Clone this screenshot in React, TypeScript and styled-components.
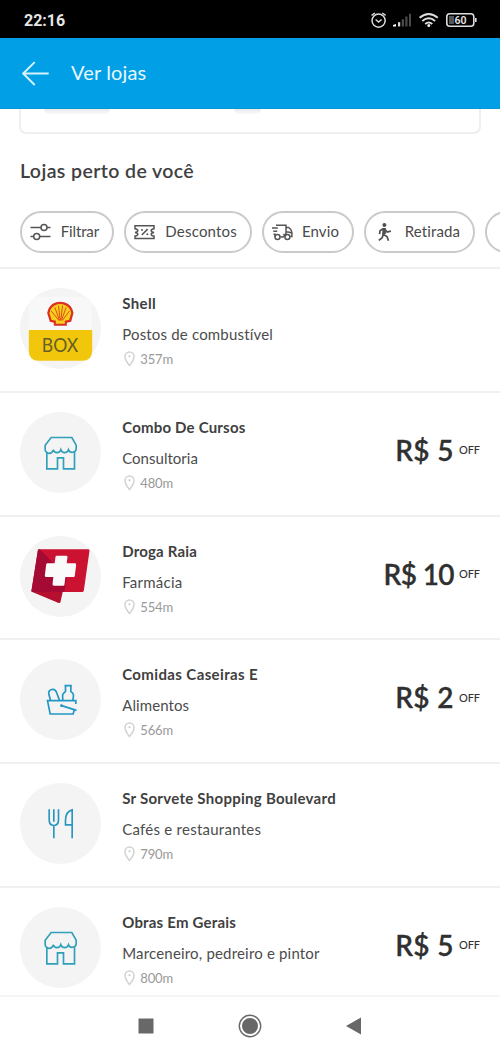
import React from "react";
import styled, { createGlobalStyle } from "styled-components";

const GlobalStyle = createGlobalStyle`
  * { box-sizing: border-box; }
  html, body { margin: 0; padding: 0; background: #fff; overflow: hidden; }
  body { font-family: Lato, "Liberation Sans", sans-serif; color: #333; }
  svg { display: block; flex: none; }
`;

const Screen = styled.div`
  width: 500px;
  height: 1056px;
  display: flex;
  flex-direction: column;
  overflow: hidden;
  background: #fff;
`;

const StatusBar = styled.div`
  height: 38px;
  flex: none;
  display: flex;
  align-items: center;
  justify-content: space-between;
  padding: 2px 22px 0 24px;
  background: #000;
`;

const Clock = styled.span`
  font: 700 16px/20px Roboto, sans-serif;
  padding-top: 1px;
  color: #e6e6e6;
`;

const Header = styled.header`
  height: 71px;
  flex: none;
  display: flex;
  align-items: center;
  gap: 22px;
  padding-left: 22px;
  background: #019fe5;
  border-bottom: 1px solid #0795d4;
`;

const HeaderTitle = styled.h1`
  margin: 0 0 2px;
  font-size: 20px;
  line-height: 24px;
  font-weight: 400;
  letter-spacing: 0.15px;
  color: #e6f8ff;
`;

const Content = styled.main`
  flex: 1;
  min-height: 0;
  overflow: hidden;
  display: flex;
  flex-direction: column;
`;

const CardEdge = styled.div`
  height: 25px;
  flex: none;
  margin: 0 19px;
  padding-left: 23px;
  display: flex;
  gap: 124px;
  border: 2px solid #efefef;
  border-top: 0;
  border-radius: 0 0 7px 7px;
`;

const CardShade = styled.div<{ $width: number }>`
  width: ${(p) => p.$width}px;
  height: 5px;
  border-radius: 0 0 12px 12px;
  background: linear-gradient(#e9e9ee, #fafafa);
`;

const SectionTitle = styled.h2`
  margin: 25px 0 28px 20px;
  font-size: 19.5px;
  line-height: 24px;
  font-weight: 600;
  letter-spacing: 0.4px;
  color: #404040;
`;

const Chips = styled.div`
  display: flex;
  flex: none;
  gap: 10px;
  padding: 0 0 14px 20px;
  height: 56px;
`;

const Chip = styled.button<{ $width: number }>`
  width: ${(p) => p.$width}px;
  height: 42px;
  flex: none;
  display: flex;
  align-items: center;
  justify-content: space-between;
  padding: 0 13px 1px 8px;
  border: 2px solid #cacaca;
  border-radius: 21px;
  background: #fff;
  font: 400 15px/20px Lato, sans-serif;
  color: #4a4a4a;
`;

const ChipLabel = styled.span<{ $track: number }>`
  padding-bottom: 1px;
  letter-spacing: ${(p) => p.$track}px;
`;

const StoreRow = styled.article`
  height: 123.75px;
  flex: none;
  display: flex;
  padding: 19px 20px 0 20px;
  border-top: 2px solid #f0f0f0;
`;

const Avatar = styled.div`
  width: 81px;
  height: 81px;
  flex: none;
  border-radius: 50%;
  background: #f4f4f4;
`;

const Info = styled.div`
  flex: 1;
  padding: 5px 0 0 21.2px;
  white-space: nowrap;
`;

const Name = styled.h3<{ $track: number }>`
  margin: 0;
  font-size: 15px;
  line-height: 20px;
  font-weight: 700;
  letter-spacing: ${(p) => p.$track}px;
  color: #404040;
`;

const Category = styled.p<{ $track: number }>`
  margin: 11px 0 0;
  font-size: 15px;
  line-height: 20px;
  letter-spacing: ${(p) => p.$track}px;
  color: #4c4c4c;
`;

const Distance = styled.div`
  margin-top: 5px;
  display: flex;
  align-items: center;
  gap: 5px;
  padding-left: 2px;
  font-size: 13px;
  line-height: 20px;
  letter-spacing: -0.1px;
  color: #999;
`;

const Price = styled.div`
  height: 40px;
  margin-top: 18px;
  display: flex;
  align-items: center;
  gap: 5px;
  white-space: nowrap;
`;

const Amount = styled.span<{ $track: number }>`
  font-size: 28px;
  line-height: 40px;
  font-weight: 600;
  letter-spacing: ${(p) => p.$track}px;
  color: #303030;
  -webkit-text-stroke: 0.3px #303030;
`;

const Off = styled.span`
  font-size: 11px;
  line-height: 14px;
  font-weight: 500;
  letter-spacing: -0.1px;
  padding-top: 1px;
  color: #333;
`;

const NavBar = styled.nav`
  height: 61px;
  flex: none;
  display: flex;
  align-items: center;
  justify-content: center;
  gap: 84px;
  padding: 0 1px 2px 0;
  border-top: 2px solid #f5f5f5;
  background: #fff;
`;

const StatusIcons = () => (
  <svg width="110" height="20" viewBox="0 0 110 20" fill="none" stroke="#ddd">
    <circle cx="10.6" cy="10.6" r="6.6" strokeWidth="1.5" />
    <path d="M7.6 9.5l3 2.5 3-2.5M3.6 5.4L6.9 3M17.6 5.4L14.3 3" strokeWidth="1.4" />
    <g stroke="none">
      <path d="M25 16.4v-1.4l3-1v2.4z" fill="#fff" />
      <path d="M30 12.2h2.2v4.2H30z" fill="#ddd" />
      <path d="M33.7 9.2H36v7.2h-2.3zM37.3 6.6h2.2v9.8h-2.2zM41 3.8h2v12.6h-2z" fill="#4a4a4a" />
    </g>
    <path d="M51.6 7.7q9-7.5 18.2 0M54.3 10.9q6.5-5.3 12.8 0M57.2 13.9q3.6-2.9 7.1 0" strokeWidth="1.9" />
    <circle cx="60.8" cy="15.4" r="1.5" fill="#eee" stroke="none" />
    <rect x="78.8" y="3.7" width="27" height="12.6" rx="3" strokeWidth="1.6" />
    <path d="M81 6h5v8h-5z" fill="#555" stroke="none" />
    <path d="M107.8 8v4" strokeWidth="1.6" />
    <text x="92.4" y="13.8" textAnchor="middle" fontFamily="Roboto" fontSize="10.5" fontWeight="600" fill="#e6e6e6" stroke="none">60</text>
  </svg>
);

const BackArrow = () => (
  <svg width="27" height="26" viewBox="0 0 27 26" fill="none" stroke="#d5f3ff" strokeWidth="1.9">
    <path d="M26.7 13.5H1.2M12.7 2.1L1.2 13.5l11.5 11.5" />
  </svg>
);

const FilterIcon = () => (
  <svg width="21" height="20" viewBox="0 0 21 20" fill="none" stroke="#555" strokeWidth="1.5">
    <path d="M.5 5.6h10.6M17 5.6h3.5M.5 14.6h3M10 14.6h10.5" />
    <circle cx="14" cy="5.6" r="3" />
    <circle cx="6.7" cy="14.6" r="3" />
  </svg>
);

const CouponIcon = () => (
  <svg width="21" height="20" viewBox="0 0 21 20" fill="none" stroke="#555" strokeWidth="1.5">
    <path d="M1 3.8h19v3q-2.8.4-2.8 1.8t2.8 1.8q-2.8.4-2.8 1.8t2.8 1.8v2.500H1V14q2.800-.4 2.800-1.800T1 10.400q2.800-.4 2.800-1.800T1 6.800z" />
    <path d="M13.6 7.1L7.8 13" />
    <circle cx="8" cy="8" r="1" fill="#555" stroke="none" />
    <circle cx="13.4" cy="12.2" r="1" fill="#555" stroke="none" />
  </svg>
);

const TruckIcon = () => (
  <svg width="21" height="20" viewBox="0 0 21 20" fill="none" stroke="#555" strokeWidth="1.5">
    <path d="M4 3.2h10v8.500l-3 3.300H8.300M0 6h5.800M1.200 9.300h4M3 14.800v-2.500H1.500M14 5.400h2.500q2.700 1.500 3.400 5v4h-1.500M14 10h2.300l3.400 1M11.500 12.200l2.500 2" />
    <circle cx="5.5" cy="15" r="2.5" />
    <circle cx="15.4" cy="15" r="2.5" />
  </svg>
);

const WalkIcon = () => (
  <svg width="21" height="20" viewBox="0 0 21 20" fill="none" stroke="#4f4f4f" strokeWidth="1.7">
    <circle cx="10.4" cy="3" r="2" fill="#4f4f4f" stroke="none" />
    <path d="M9.7 6.5l-.7 5.700 4 2.300 1.500 4.200M9.200 12.200l-1 3.500-3.400 2.700M9.500 6.500L6 8.800l-.4 3.400M10.300 6.500l2.800 3.500 3.800-.8" />
    <path d="M8.8 6h3v6H8.600z" fill="#4f4f4f" stroke="none" />
  </svg>
);

const PinIcon = () => (
  <svg width="11" height="16" viewBox="0 0 11 16" fill="none" stroke="#d2d2d2" strokeWidth="1.5">
    <path d="M5.500 14.500Q1 9 1 5.700a4.500 4.700 0 0 1 9 0Q10 9 5.500 14.500z" />
    <circle cx="5.5" cy="5.3" r="1" fill="#c5c5c5" stroke="none" />
  </svg>
);

const StorefrontArt = () => (
  <svg width="81" height="81" viewBox="0 0 81 81">
    <g transform="translate(-10.5 -11.5) scale(.33333)" fill="none" stroke="#2f9fba" strokeWidth="5">
      <path d="M125 111h62l13 23v11a12 12 0 0 1-23 3 12 12 0 0 1-23 0 12 12 0 0 1-23 0 12 12 0 0 1-24-3v-11z" />
      <path d="M112 155v50h32v-33h18v33h33v-50" />
    </g>
  </svg>
);

const GroceriesArt = () => (
  <svg width="81" height="81" viewBox="0 0 81 81">
    <g transform="translate(-10.5 -9) scale(.33333)" fill="none" stroke="#2197c4" strokeWidth="5">
      <path d="M199 162v-10h-85l8 40h69l3-12" />
      <path d="M154 166l47 15" />
      <circle cx="156" cy="167" r="4" fill="#2197c4" stroke="none" />
      <path d="M123 151l-5-18c-4-16 18-21 23-6l9 24M160 151c-1-18-3-17 8-27v-17h16v17c10 9 9 9 6 27M165 107h22" />
    </g>
  </svg>
);

const CutleryArt = () => (
  <svg width="81" height="81" viewBox="0 0 81 81">
    <g transform="translate(-10.5 -132.8) scale(.33333)" fill="none" stroke="#2997c0" strokeWidth="5">
      <path d="M119 477v32q0 17 14 17t14-17v-32M133 477v38M133 526v38M188 564v-85q-20 5-20 32v13h20" />
    </g>
  </svg>
);

const ShellArt = () => (
  <svg width="81" height="81" viewBox="0 0 81 81">
    <g transform="translate(-10.5 -8) scale(.33333)">
      <rect x="58" y="50" width="190" height="192" rx="26" fill="#f8f8f8" />
      <path d="M58 150h190v62q0 30-30 30H88q-30 0-30-30z" fill="#f2c60b" />
      <path d="M133 137v-9l-12-3-8-26q4-25 27-32 12-3 24 0 24 7 28 32l-7 26-13 3v9z" fill="#da3024" />
      <path d="M139 131v-9l-13-3-6-20q4-21 24-26 8-2 16 0 21 5 25 26l-6 20-13 3v9z" fill="#f7cf18" />
      <path d="M149 122l-24-29M150 121l-14-39M152 121l-5-44M154 121l5-44M156 121l14-39M158 122l22-29" fill="none" stroke="#da3024" strokeWidth="2.5" />
      <text x="97" y="215" fontFamily="Lato" fontSize="60" fontWeight="400" textLength="109" lengthAdjust="spacingAndGlyphs" fill="#655f28">BOX</text>
    </g>
  </svg>
);

const PharmacyArt = () => (
  <svg width="81" height="81" viewBox="0 0 81 81">
    <g transform="translate(-10.5 -11) scale(.33333)" strokeLinejoin="round">
      <path d="M70 197l87-2-8 35z" fill="#b5102f" stroke="#b5102f" strokeWidth="8" />
      <path d="M89 77h147l-17 120H70z" fill="#cb1230" stroke="#cb1230" strokeWidth="8" />
      <path d="M89 77l79 80-7 40H70z" fill="#a50a35" stroke="#a50a35" strokeWidth="8" />
      <path d="M142 96h28l-3 23h29l-4 33h-28l-3 26h-28l3-26h-26l4-33h25z" fill="#fafafa" stroke="#fafafa" strokeWidth="8" />
    </g>
  </svg>
);

type Store = {
  name: string;
  nameTrack: number;
  category: string;
  categoryTrack: number;
  distance: string;
  amount?: string;
  amountTrack?: number;
  Art: () => React.ReactElement;
};

const stores: Store[] = [
  { name: "Shell", nameTrack: 0.4, category: "Postos de combustível", categoryTrack: 0.18, distance: "357m", Art: ShellArt },
  { name: "Combo De Cursos", nameTrack: 0.2, category: "Consultoria", categoryTrack: 0.02, distance: "480m", amount: "R$ 5", amountTrack: 0.4, Art: StorefrontArt },
  { name: "Droga Raia", nameTrack: 0.2, category: "Farmácia", categoryTrack: 0.25, distance: "554m", amount: "R$ 10", amountTrack: -0.6, Art: PharmacyArt },
  { name: "Comidas Caseiras E", nameTrack: 0.38, category: "Alimentos", categoryTrack: 0.1, distance: "566m", amount: "R$ 2", amountTrack: 0.4, Art: GroceriesArt },
  { name: "Sr Sorvete Shopping Boulevard", nameTrack: 0.27, category: "Cafés e restaurantes", categoryTrack: 0.25, distance: "790m", Art: CutleryArt },
  { name: "Obras Em Gerais", nameTrack: 0.2, category: "Marceneiro, pedreiro e pintor", categoryTrack: 0.18, distance: "800m", amount: "R$ 5", amountTrack: 0.4, Art: StorefrontArt },
];

export default function App() {
  return (
    <Screen>
      <GlobalStyle />
      <StatusBar>
        <Clock>22:16</Clock>
        <StatusIcons />
      </StatusBar>
      <Header>
        <BackArrow />
        <HeaderTitle>Ver lojas</HeaderTitle>
      </Header>
      <Content>
        <CardEdge>
          <CardShade $width={66} />
          <CardShade $width={27} />
        </CardEdge>
        <SectionTitle>Lojas perto de você</SectionTitle>
        <Chips>
          <Chip $width={94}><FilterIcon /><ChipLabel $track={-0.15}>Filtrar</ChipLabel></Chip>
          <Chip $width={128}><CouponIcon /><ChipLabel $track={0.2}>Descontos</ChipLabel></Chip>
          <Chip $width={92}><TruckIcon /><ChipLabel $track={0.1}>Envio</ChipLabel></Chip>
          <Chip $width={111}><WalkIcon /><ChipLabel $track={0.1}>Retirada</ChipLabel></Chip>
          <Chip $width={94} aria-hidden />
        </Chips>
        {stores.map(({ name, nameTrack, category, categoryTrack, distance, amount, amountTrack = 0, Art }) => (
          <StoreRow key={name}>
            <Avatar><Art /></Avatar>
            <Info>
              <Name $track={nameTrack}>{name}</Name>
              <Category $track={categoryTrack}>{category}</Category>
              <Distance><PinIcon />{distance}</Distance>
            </Info>
            {amount && (
              <Price>
                <Amount $track={amountTrack}>{amount}</Amount>
                <Off>OFF</Off>
              </Price>
            )}
          </StoreRow>
        ))}
      </Content>
      <NavBar>
        <svg width="16" height="16"><path d="M.5.5h15v15H.5z" fill="#686868" /></svg>
        <svg width="24" height="24">
          <circle cx="12" cy="12" r="10.7" fill="none" stroke="#686868" strokeWidth="1.4" />
          <circle cx="12" cy="12" r="8" fill="#686868" />
        </svg>
        <svg width="16" height="18"><path d="M0 9L15 .5v17z" fill="#686868" /></svg>
      </NavBar>
    </Screen>
  );
}
